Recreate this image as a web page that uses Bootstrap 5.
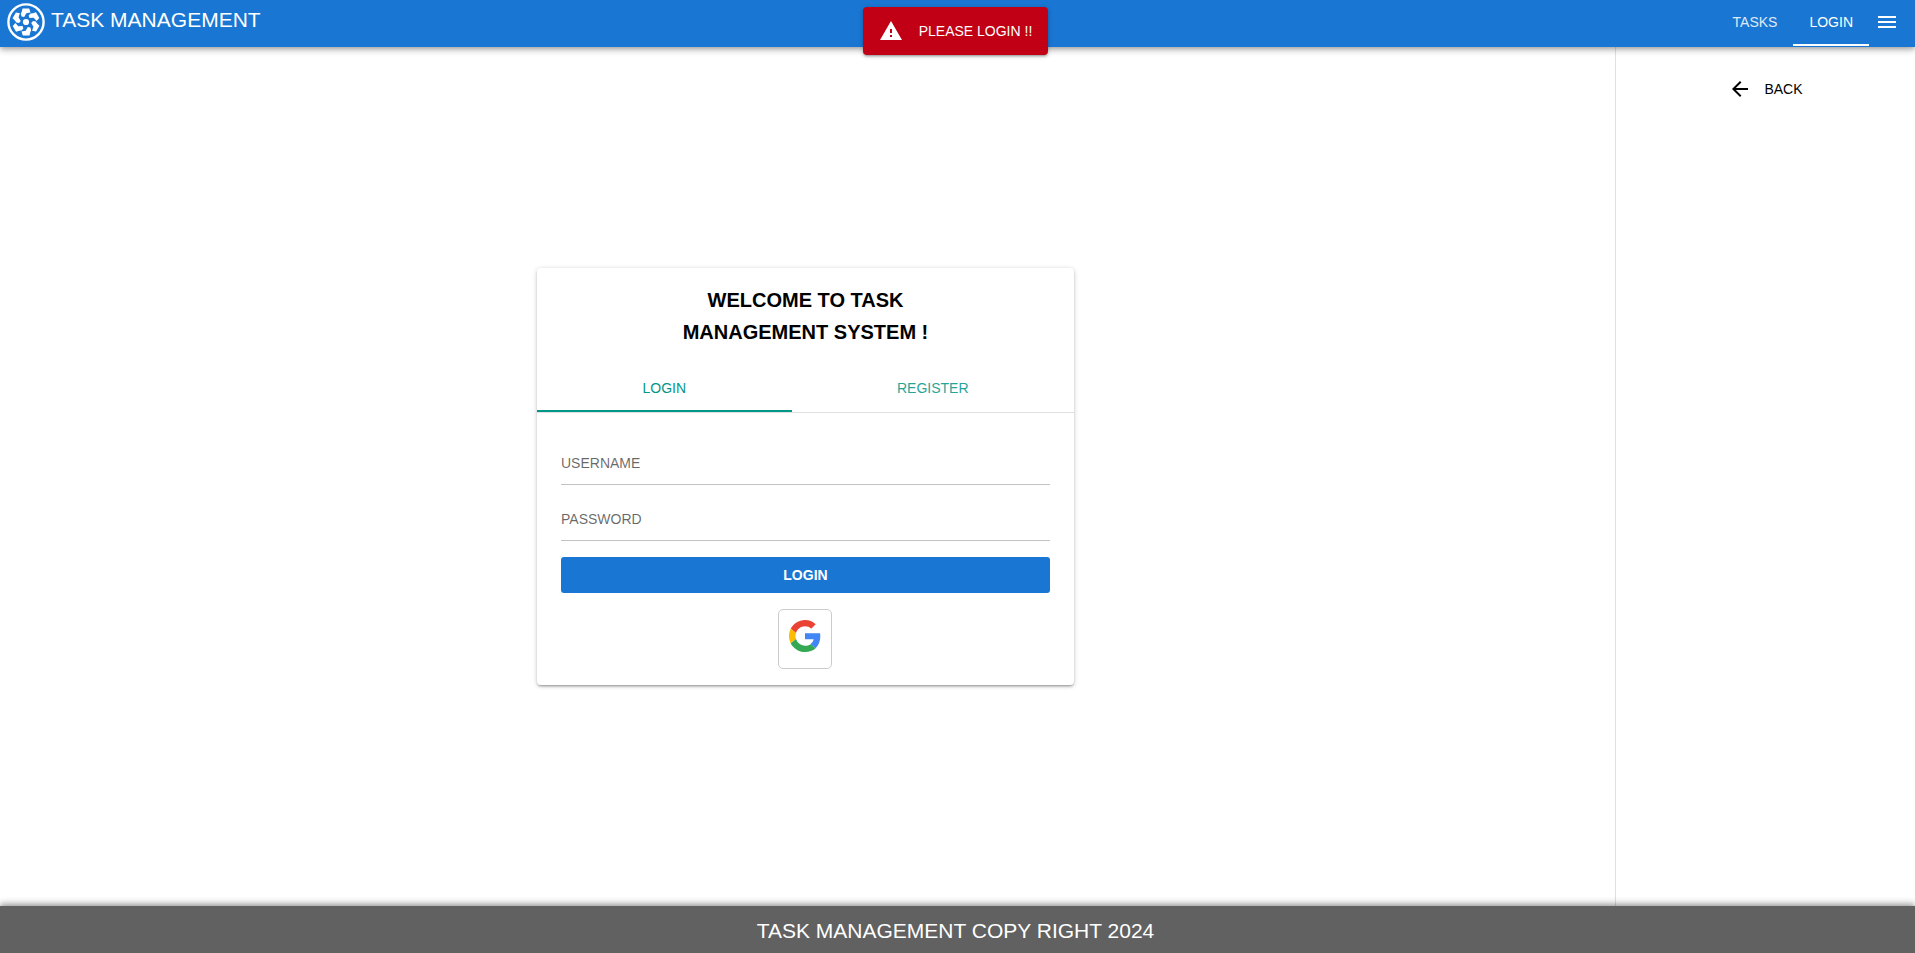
<!DOCTYPE html>
<html lang="en">
<head>
<meta charset="utf-8">
<meta name="viewport" content="width=device-width, initial-scale=1">
<title>Task Management</title>
<link href="https://cdn.jsdelivr.net/npm/bootstrap@5.3.0/dist/css/bootstrap.min.css" rel="stylesheet">
<style>
  :root { --brand: #1976d2; --accent: #009688; --danger: #c10015; --line: rgba(0,0,0,.12); }
  body { font: 14px/21px "Liberation Sans", Arial, sans-serif; color: #000; }
  svg { display: block; }
  .topbar { background: var(--brand); height: 47px; z-index: 2;
    box-shadow: 0 2px 4px -1px rgba(0,0,0,.2), 0 4px 5px rgba(0,0,0,.14), 0 1px 10px rgba(0,0,0,.12); }
  .brand-link, .brand-link:hover { color: #fff; font-size: 21px; line-height: 40px; padding-left: 7px; gap: 6px; }
  .brand-link svg { margin-top: 3px; }
  .tab-item { color: inherit; padding: 0 16px; border: 0; border-bottom: 2px solid transparent; background: none; opacity: .85; }
  .tab-item.active { border-bottom-color: currentColor; opacity: 1; }
  .topbar .tab-item { color: #fff; line-height: 44px; height: 46px; }
  .menu-btn { width: 36px; border: 0; background: none; color: #fff; padding: 0 6px; margin-right: 10px; height: 44px; }
  .toast-layer { top: 7px; z-index: 5; }
  .toast-note { background: var(--danger); color: #fff; border-radius: 4px; height: 48px; padding: 0 16px;
    box-shadow: 0 1px 5px rgba(0,0,0,.2), 0 2px 2px rgba(0,0,0,.14), 0 3px 1px -2px rgba(0,0,0,.12); }
  .side { width: 300px; border-left: 1px solid var(--line); padding-top: 30px; }
  .back-link { color: #000; line-height: 24px; }
  .login-card { width: 33.3333%; min-width: 300px; border-radius: 4px; background: #fff;
    box-shadow: 0 1px 5px rgba(0,0,0,.2), 0 2px 2px rgba(0,0,0,.14), 0 3px 1px -2px rgba(0,0,0,.12); }
  .login-card h1 { font-size: 20px; line-height: 32px; font-weight: 700; }
  .card-tabs { color: var(--accent); border-bottom: 1px solid var(--line); }
  .card-tabs .tab-item { height: 48px; padding-top: 2px; }
  .card-form { padding: 32px 24px 16px; }
  .line-input, .line-input:focus { height: 40px; border: 0; border-bottom: 1px solid rgba(0,0,0,.24); border-radius: 0;
    padding: 0 0 4px; font-size: 14px; box-shadow: none; }
  .line-input::placeholder { color: rgba(0,0,0,.6); }
  .btn-brand, .btn-brand:hover { background: var(--brand); color: #fff; height: 36px; font-size: 14px; font-weight: 700; border: 0; border-radius: 3px; }
  .google-btn { width: 54px; height: 60px; background: #fff; border: 1px solid #ccc; border-radius: 5px; padding: 10px; }
  .bottombar { background: #616161; color: #fff; height: 47px; font-size: 21px; line-height: 32px; padding-top: 2px; z-index: 2;
    box-shadow: 0 -2px 4px -1px rgba(0,0,0,.2), 0 -4px 5px rgba(0,0,0,.14), 0 -1px 10px rgba(0,0,0,.12); }
</style>
</head>
<body class="d-flex flex-column min-vh-100">
<header class="topbar position-relative d-flex align-items-start">
  <a href="#" class="brand-link d-flex text-decoration-none me-auto">
    <svg width="38" height="38" viewBox="-19 -19 38 38" fill="#fff" aria-hidden="true">
      <defs><path id="blade" d="M-3.5 -13.5H3.2L4.5 -9.6L.3 -8.8L-1.8 -5L-4.4 -5.6L-5.2 -8.2L-4.2 -10.4Z"/></defs>
      <circle r="17.6" fill="none" stroke="#fff" stroke-width="2.4"/>
      <circle r="3.1"/>
      <use href="#blade"/><use href="#blade" transform="rotate(60)"/><use href="#blade" transform="rotate(120)"/>
      <use href="#blade" transform="rotate(180)"/><use href="#blade" transform="rotate(240)"/><use href="#blade" transform="rotate(300)"/>
    </svg>
    <span>TASK MANAGEMENT</span>
  </a>
  <nav class="d-flex">
    <a href="#" class="tab-item text-decoration-none">TASKS</a>
    <a href="#" class="tab-item active text-decoration-none">LOGIN</a>
  </nav>
  <button class="menu-btn" type="button" aria-label="Menu">
    <svg width="24" height="24" viewBox="0 0 24 24" fill="currentColor"><path d="M3 18h18v-2H3v2zm0-5h18v-2H3v2zm0-7v2h18V6H3z"/></svg>
  </button>
</header>

<div class="toast-layer position-absolute w-100 d-flex justify-content-center pe-1">
  <div class="toast-note d-flex align-items-center gap-3" role="alert">
    <svg width="24" height="24" viewBox="0 0 24 24" fill="currentColor"><path d="M1 21h22L12 2 1 21zm12-3h-2v-2h2v2zm0-4h-2v-4h2v4z"/></svg>
    <span>PLEASE LOGIN !!</span>
  </div>
</div>

<div class="d-flex flex-grow-1">
  <main class="flex-grow-1 d-flex align-items-center justify-content-center pe-1">
    <section class="login-card">
      <h1 class="text-center p-3 m-0">WELCOME TO TASK<br>MANAGEMENT SYSTEM !</h1>
      <div class="card-tabs d-flex" role="tablist">
        <button type="button" class="tab-item active flex-fill" role="tab" aria-selected="true">LOGIN</button>
        <button type="button" class="tab-item flex-fill" role="tab" aria-selected="false">REGISTER</button>
      </div>
      <form class="card-form d-flex flex-column gap-3">
        <input class="form-control line-input" type="text" placeholder="USERNAME" aria-label="Username">
        <input class="form-control line-input" type="password" placeholder="PASSWORD" aria-label="Password">
        <button class="btn btn-brand py-0" type="submit">LOGIN</button>
        <button class="google-btn align-self-center d-flex" type="button" aria-label="Sign in with Google">
          <svg width="32" height="32" viewBox="0 0 48 48"><path fill="#EA4335" d="M24 9.5c3.54 0 6.71 1.22 9.21 3.6l6.85-6.85C35.9 2.38 30.47 0 24 0 14.62 0 6.51 5.38 2.56 13.22l7.98 6.19C12.43 13.72 17.74 9.5 24 9.5z"/><path fill="#4285F4" d="M46.98 24.55c0-1.57-.15-3.09-.38-4.55H24v9.02h12.94c-.58 2.96-2.26 5.48-4.78 7.18l7.73 6c4.51-4.18 7.09-10.36 7.09-17.65z"/><path fill="#FBBC05" d="M10.53 28.59c-.48-1.45-.76-2.99-.76-4.59s.27-3.14.76-4.59l-7.98-6.19C.92 16.46 0 20.12 0 24c0 3.88.92 7.54 2.56 10.78l7.97-6.19z"/><path fill="#34A853" d="M24 48c6.48 0 11.93-2.13 15.89-5.81l-7.73-6c-2.15 1.45-4.92 2.3-8.16 2.3-6.26 0-11.57-4.22-13.47-9.91l-7.98 6.19C6.51 42.62 14.62 48 24 48z"/></svg>
        </button>
      </form>
    </section>
  </main>
  <aside class="side flex-shrink-0 d-flex justify-content-center align-items-start">
    <a href="#" class="back-link d-flex text-decoration-none gap-2">
      <svg width="24" height="24" viewBox="0 0 24 24"><path d="M20 11H7.83l5.59-5.59L12 4l-8 8 8 8 1.41-1.41L7.83 13H20v-2z"/></svg>
      <span class="ps-1">BACK</span>
    </a>
  </aside>
</div>

<footer class="bottombar position-relative d-flex align-items-center justify-content-center pe-1">TASK MANAGEMENT COPY RIGHT 2024</footer>
<script src="https://cdn.jsdelivr.net/npm/bootstrap@5.3.0/dist/js/bootstrap.bundle.min.js"></script>
</body>
</html>
